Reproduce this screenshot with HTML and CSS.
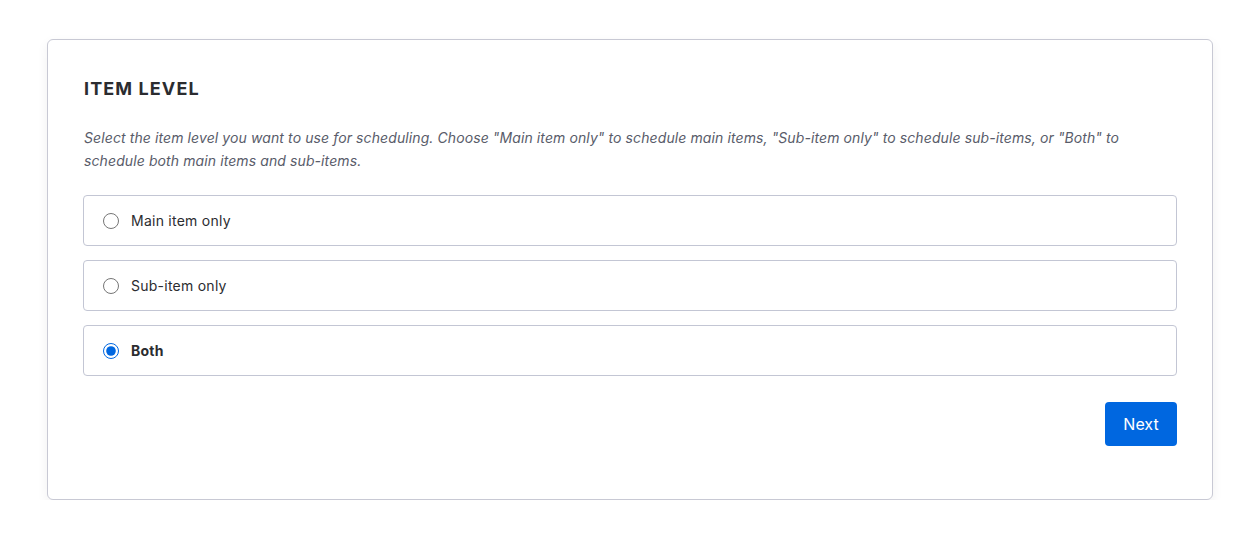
FILE: index.html
```html
<!DOCTYPE html>
<html lang="en">
<head>
    <meta charset="UTF-8">
    <title>Item level</title>
    <link rel="stylesheet" href="styles.css">
</head>
<body>
    <div class="card">
        <div class="card-title">ITEM LEVEL</div>
        <p class="card-desc">Select the item level you want to use for scheduling. Choose "Main item only" to schedule main items, "Sub-item only" to schedule sub-items, or "Both" to schedule both main items and sub-items.</p>

        <div class="options">
            <label class="option">
                <input type="radio" name="level">
                <span>Main item only</span>
            </label>
            <label class="option">
                <input type="radio" name="level">
                <span>Sub-item only</span>
            </label>
            <label class="option selected">
                <input type="radio" name="level" checked>
                <span>Both</span>
            </label>
        </div>

        <div class="actions">
            <button class="btn-next">Next</button>
        </div>
    </div>
</body>
</html>
```

FILE: styles.css
```css
body {
    margin: 0;
    padding: 39px 38px 0 47px;
    font-family: Inter, Roboto, sans-serif;
    background-color: #ffffff;
    color: #323338;
}

.card {
    border: 1px solid #c8c9d4;
    border-radius: 6px;
    padding: 38px 35px 53px 35px;
    box-shadow: 0 4px 12px rgba(0, 0, 0, 0.06);
    background-color: #fff;
}

.card-title {
    padding-left: 1px;
    font-size: 18px;
    font-weight: bold;
    letter-spacing: 1.1px;
    line-height: 22px;
    color: #2b2c30;
}

.card-desc {
    max-width: 1080px;
    margin: 26px 0 0 1px;
    font-size: 14px;
    font-style: italic;
    letter-spacing: 0.1px;
    line-height: 23px;
    color: #595c6a;
}

.options {
    display: flex;
    flex-direction: column;
    gap: 14px;
    margin-top: 23px;
}

.option {
    display: flex;
    align-items: center;
    height: 49px;
    border: 1px solid #c3c6d4;
    border-radius: 4px;
    padding: 0 19px;
    font-size: 14px;
    letter-spacing: 0.25px;
    color: #2b2c30;
    cursor: pointer;
}

.option input {
    width: 16px;
    height: 16px;
    margin: 0 12px 0 0;
    accent-color: #0067e0;
}

.option.selected span {
    font-weight: bold;
}

.actions {
    display: flex;
    justify-content: flex-end;
    margin-top: 26px;
}

.btn-next {
    background-color: #0067e0;
    color: #fff;
    border: none;
    border-radius: 4px;
    width: 72px;
    height: 44px;
    font-family: inherit;
    font-size: 16px;
    cursor: pointer;
}
```
